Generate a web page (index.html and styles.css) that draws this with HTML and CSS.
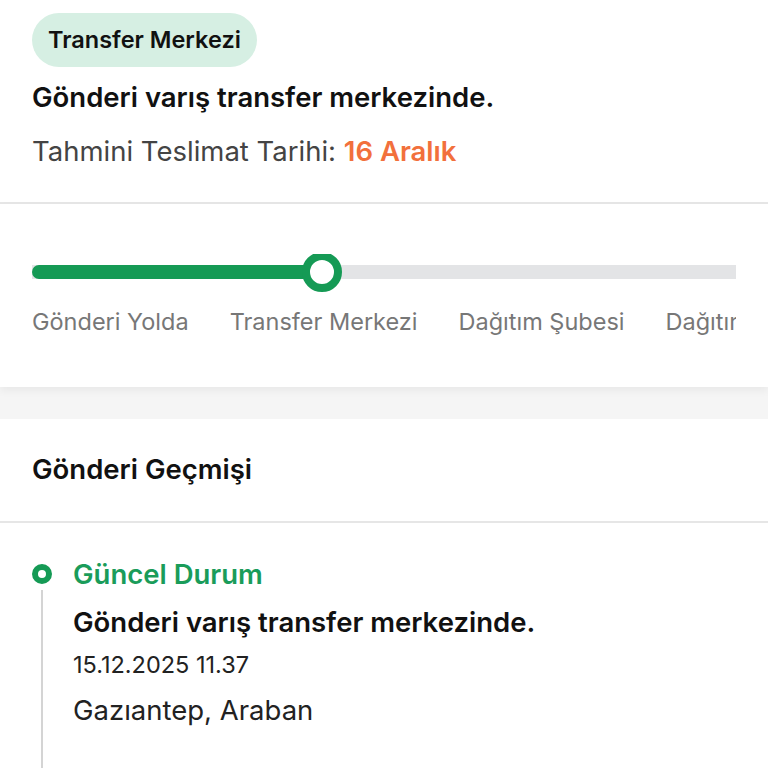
FILE: index.html
```html
<!DOCTYPE html>
<html lang="tr">
<head>
    <meta charset="UTF-8">
    <meta name="viewport" content="width=device-width, initial-scale=1.0">
    <title>Gönderi Takip</title>
    <link rel="stylesheet" href="styles.css">
</head>
<body>
    <div class="card summary">
        <span class="badge">Transfer Merkezi</span>
        <h2 class="status">Gönderi varış transfer merkezinde.</h2>
        <p class="eta">Tahmini Teslimat Tarihi: <span class="eta-date">16 Aralık</span></p>
    </div>

    <div class="card progress-card">
        <div class="progress-scroll">
            <div class="track">
                <div class="track-fill"></div>
                <div class="track-knob"></div>
            </div>
            <div class="steps">
                <span>Gönderi Yolda</span>
                <span>Transfer Merkezi</span>
                <span>Dağıtım Şubesi</span>
                <span>Dağıtıma Çıktı</span>
                <span>Teslim Edildi</span>
            </div>
        </div>
    </div>

    <div class="card history">
        <h3 class="history-title">Gönderi Geçmişi</h3>
        <div class="timeline">
            <div class="event">
                <span class="dot"></span>
                <div class="event-head">Güncel Durum</div>
                <div class="event-text">Gönderi varış transfer merkezinde.</div>
                <div class="event-date">15.12.2025 11.37</div>
                <div class="event-place">Gazıantep, Araban</div>
            </div>
        </div>
    </div>
</body>
</html>
```

FILE: styles.css
```css
/* Base */
body {
    font-family: 'Inter', 'Noto Sans', sans-serif;
    background-color: #f5f5f5;
    margin: 0;
    padding: 0;
    color: #111;
}

.card {
    background-color: #fff;
}

/* Summary */
.summary {
    padding: 13px 32px 35px;
    border-bottom: 2px solid #e6e6e6;
}

.badge {
    display: inline-block;
    background-color: #d6efe3;
    border-radius: 27px;
    padding: 0 16px;
    height: 54px;
    line-height: 54px;
    font-size: 23.5px;
    font-weight: 600;
    color: #111;
}

.status {
    margin: 14px 0 0;
    font-size: 27.5px;
    font-weight: 600;
    line-height: 32px;
}

.eta {
    margin: 22px 0 0;
    font-size: 27.5px;
    line-height: 32px;
    color: #444;
}

.eta-date {
    color: #f2703c;
    font-weight: 600;
}

/* Progress */
.progress-card {
    padding: 50px 32px 50px;
    box-shadow: 0 4px 8px rgba(0, 0, 0, 0.05);
    margin-bottom: 32px;
}

.progress-scroll {
    overflow: hidden;
}

.track {
    position: relative;
    height: 14px;
    background-color: #e3e4e6;
    margin: 11px 0;
}

.track-fill {
    width: 290px;
    height: 100%;
    background-color: #159a55;
    border-radius: 7px 0 0 7px;
}

.track-knob {
    position: absolute;
    left: 270px;
    top: -13px;
    width: 24px;
    height: 24px;
    border: 8px solid #159a55;
    border-radius: 50%;
    background-color: #fff;
}

.steps {
    display: flex;
    gap: 41px;
    margin-top: 28px;
    white-space: nowrap;
    font-size: 23.5px;
    line-height: 30px;
    color: #777;
}

/* History */
.history {
    min-height: 360px;
}

.history-title {
    margin: 0;
    padding: 34px 32px 36px;
    font-size: 27.5px;
    font-weight: 600;
    line-height: 32px;
    border-bottom: 2px solid #e6e6e6;
}

.timeline {
    padding: 35px 32px 0;
}

.event {
    position: relative;
    padding-left: 41px;
    padding-bottom: 60px;
}

.event::before {
    content: "";
    position: absolute;
    left: 9px;
    top: 32px;
    bottom: 0;
    width: 2px;
    background-color: #d4d4d4;
}

.dot {
    position: absolute;
    left: 0;
    top: 6px;
    width: 8px;
    height: 8px;
    border: 6px solid #159a55;
    border-radius: 50%;
}

.event-head {
    font-size: 27.5px;
    font-weight: 600;
    line-height: 32px;
    color: #1a9c5a;
}

.event-text {
    margin-top: 16px;
    font-size: 27.5px;
    font-weight: 600;
    line-height: 32px;
}

.event-date {
    margin-top: 12px;
    font-size: 23.5px;
    line-height: 30px;
    color: #222;
}

.event-place {
    margin-top: 14px;
    font-size: 27.5px;
    line-height: 32px;
    color: #222;
}
```
